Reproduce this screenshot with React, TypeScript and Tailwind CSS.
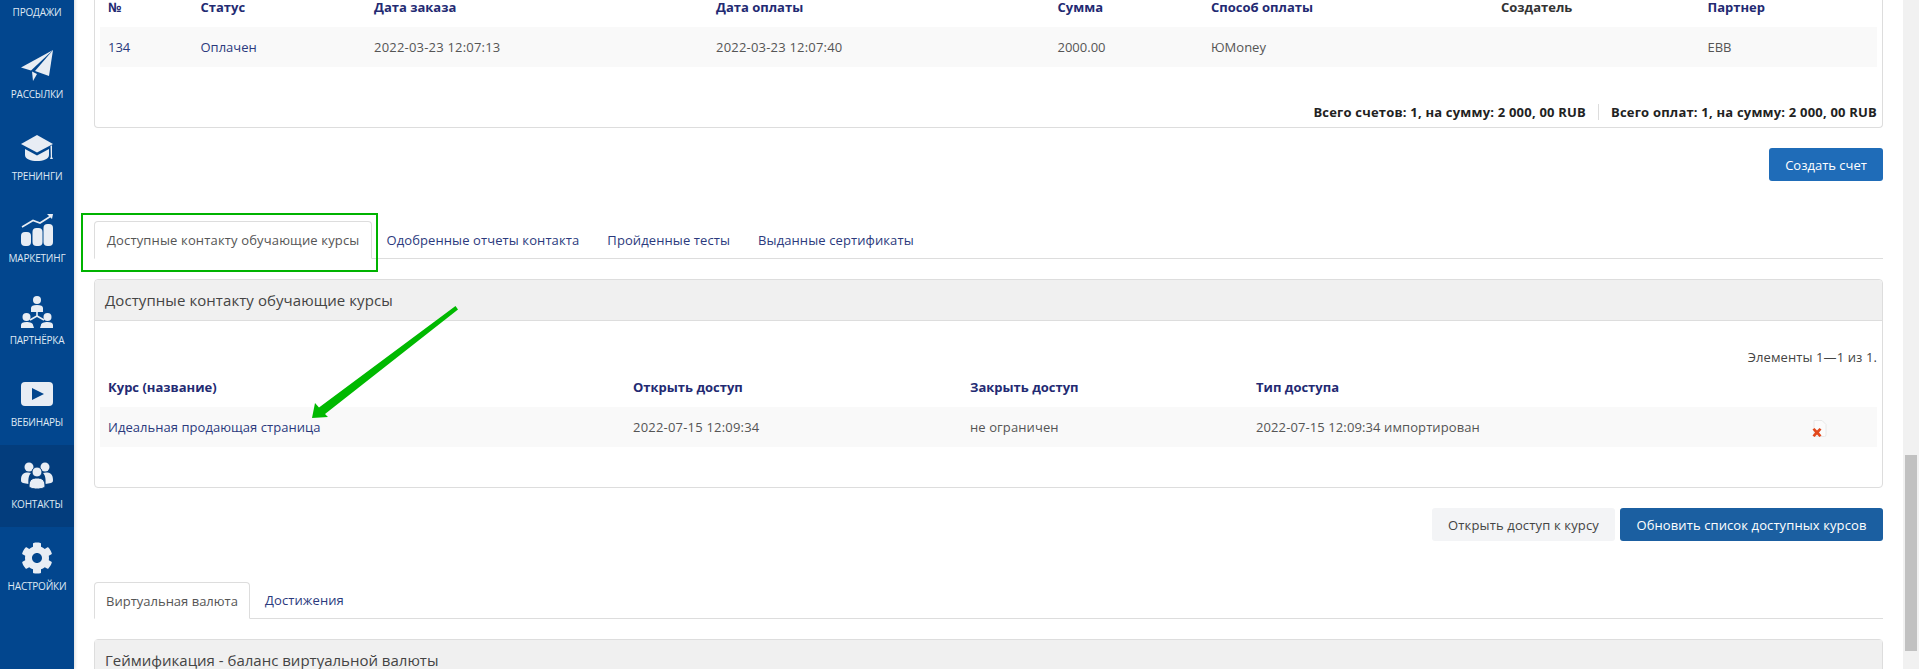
import React from "react";
import { FaCog } from "react-icons/fa";

const iconColor = "#e8edf4";

const PlaneIcon = () => (
  <svg width="32" height="32" viewBox="0 0 32 32" fill={iconColor}>
    <path d="M32 0 L0 17.5 L10 20.5 Z" />
    <path d="M32 0 L14 21 L28 26 Z" />
    <path d="M11 21.5 L16 24 L12 31 Z" />
  </svg>
);
const CapIcon = () => (
  <svg width="32" height="32" viewBox="0 0 32 32" fill={iconColor}>
    <path d="M16 3 L32 12 L16 20.5 L0 12 Z" />
    <path d="M4 17 L16 23.5 L28 17 L28 23 C28 27 22 29 16 29 C10 29 4 27 4 23 Z" />
    <path d="M29.5 14 L31 13.3 L31 25 L32 27 L29 27 L29.8 25 Z" />
  </svg>
);
const ChartIcon = () => (
  <svg width="32" height="32" viewBox="0 0 32 32" fill={iconColor}>
    <rect x="0" y="18" width="10" height="14" rx="4" />
    <rect x="11.5" y="14" width="10" height="18" rx="4" />
    <rect x="22.5" y="10" width="9.5" height="22" rx="4" />
    <path d="M1 13 L12 6.5 L19 9 L30 2" fill="none" stroke={iconColor} strokeWidth="1.6" />
    <path d="M26 0 L32 0 L31 5 Z" />
  </svg>
);
const PartnerIcon = () => (
  <svg width="32" height="32" viewBox="0 0 32 32" fill={iconColor}>
    <circle cx="16" cy="4" r="4" />
    <path d="M10 12 C10 10 12 9 16 9 C20 9 22 10 22 12 L22 16 L10 16 Z" />
    <path d="M16 16 L16 20 L9 24 M16 20 L23 24" fill="none" stroke={iconColor} strokeWidth="1.6" />
    <circle cx="5.5" cy="21" r="4" />
    <circle cx="26.5" cy="21" r="4" />
    <path d="M0 32 L0 29 C0 27 2 26 5.5 26 C9 26 12 27 12 29 L13 32 Z" />
    <path d="M19 32 L20 29 C20 27 23 26 26.5 26 C30 26 32 27 32 29 L32 32 Z" />
  </svg>
);
const PlayIcon = () => (
  <svg width="32" height="32" viewBox="0 0 32 32">
    <rect x="0" y="4" width="32" height="24" rx="4" fill={iconColor} />
    <path d="M11 10 L23 16 L11 22 Z" fill="#02468e" />
  </svg>
);
const UsersIcon = () => (
  <svg width="32" height="32" viewBox="0 0 32 32" fill={iconColor}>
    <circle cx="8" cy="7" r="4.5" />
    <circle cx="24" cy="7" r="4.5" />
    <path d="M0 20 C0 14 3 12.5 7 12.5 L10 13 C8 15 7 18 7.5 24 L2 23 C0.5 22.5 0 22 0 20 Z" />
    <path d="M32 20 C32 14 29 12.5 25 12.5 L22 13 C24 15 25 18 24.5 24 L30 23 C31.5 22.5 32 22 32 20 Z" />
    <circle cx="16" cy="12" r="5" fill={iconColor} stroke="#033d7d" strokeWidth="1" />
    <path d="M8 26 C8 20 11 18 16 18 C21 18 24 20 24 26 C24 28 20 29 16 29 C12 29 8 28 8 26 Z" stroke="#033d7d" strokeWidth="1" />
  </svg>
);

const navItems: [string, React.ReactNode, boolean][] = [
  ["Продажи", null, false],
  ["Рассылки", <PlaneIcon />, false],
  ["Тренинги", <CapIcon />, false],
  ["Маркетинг", <ChartIcon />, false],
  ["Партнёрка", <PartnerIcon />, false],
  ["Вебинары", <PlayIcon />, false],
  ["Контакты", <UsersIcon />, true],
  ["Настройки", <FaCog size={32} color={iconColor} />, false],
];

const navy = "text-[#232a72]";
const grid1 = "grid grid-cols-[92.5px_173.5px_342px_341.5px_153.5px_290px_206.5px_1fr] pl-2";
const grid2 = "grid grid-cols-[525px_337px_286px_1fr] pl-2";

const DeleteIcon = () => (
  <svg className="mt-[2px]" width="16" height="17" viewBox="0 0 16 17">
    <path d="M3 0.5 L11 0.5 L15 4.5 L15 15 Q15 16.5 13.5 16.5 L3 16.5 Z" fill="#fbfbfb" stroke="#e8e8e8" />
    <path d="M1.5 9.5 L3.5 8 L6 10.5 L8.5 8 L10.5 9.5 L8 12.5 L10.5 15.5 L8.5 17 L6 14.5 L3.5 17 L1.5 15.5 L4 12.5 Z" fill="#e2481c" />
  </svg>
);

const ActiveTab = ({ children, className }: { children: React.ReactNode; className: string }) => (
  <div className={`-mb-px flex items-center text-[#555] bg-white border border-[#ddd] border-b-white rounded-t-[4px] ${className}`}>
    {children}
  </div>
);
const Tab = ({ children, className }: { children: React.ReactNode; className: string }) => (
  <div className={`flex items-center text-[#2b3a7d] ${className}`}>{children}</div>
);

export default function App() {
  return (
    <div
      className="flex h-[669px] w-full overflow-hidden bg-white text-[13px] leading-4 text-[#555]"
      style={{ fontFamily: '"Open Sans", "Noto Sans", sans-serif' }}
    >
      <aside className="w-[74px] shrink-0 bg-[#02468e] shadow-[1px_0_3px_rgba(0,0,0,0.15)] -mt-[47px] h-[716px]">
        {navItems.map(([label, icon, active]) => (
          <div key={label} className={`h-[82px] flex flex-col items-center pt-[15px] ${active ? "bg-[#033d7d]" : ""}`}>
            <div className="h-[32px] w-[32px]">{icon}</div>
            <div className="mt-[5px] text-[10px] leading-[14px] uppercase tracking-[-0.2px] text-[#dfe8f3] whitespace-nowrap">
              {label}
            </div>
          </div>
        ))}
      </aside>

      <main className="relative flex-1 min-w-0 px-5">
        {/* Invoices panel */}
        <section className="h-[128px] border border-t-0 border-[#ddd] rounded-b-[4px] px-[5px]">
          <div className={`${grid1} h-[27px] font-bold leading-[14px] ${navy}`}>
            <div>№</div>
            <div>Статус</div>
            <div>Дата заказа</div>
            <div>Дата оплаты</div>
            <div>Сумма</div>
            <div>Способ оплаты</div>
            <div className="text-[#333]">Создатель</div>
            <div>Партнер</div>
          </div>
          <div className={`${grid1} h-[40px] items-center bg-[#f9f9f9]`}>
            <div className="text-[#2b3a7d]">134</div>
            <div className="text-[#2b3a7d]">Оплачен</div>
            <div className="tracking-[0.2px]">2022-03-23 12:07:13</div>
            <div className="tracking-[0.2px]">2022-03-23 12:07:40</div>
            <div>2000.00</div>
            <div>ЮMoney</div>
            <div />
            <div>EBB</div>
          </div>
          <div className="mt-[35px] flex justify-end items-center h-5 font-bold text-[#222] tracking-[0.2px]">
            <span>Всего счетов: 1, на сумму: 2 000, 00 RUB</span>
            <span className="mx-3 h-4 w-px bg-[#ddd]" />
            <span>Всего оплат: 1, на сумму: 2 000, 00 RUB</span>
          </div>
        </section>

        <div className="mt-5 flex justify-end">
          <button className="h-[33px] w-[114px] rounded-[3px] bg-[#1f6cb8] text-white text-[13px]">Создать счет</button>
        </div>

        {/* Tabs 1 */}
        <nav className="mt-[40px] flex border-b border-[#ddd] h-[38px]">
          <ActiveTab className="px-3 tracking-[0.15px]">Доступные контакту обучающие курсы</ActiveTab>
          <Tab className="px-[14px] tracking-[0.1px]">Одобренные отчеты контакта</Tab>
          <Tab className="px-[14px] tracking-[0.1px]">Пройденные тесты</Tab>
          <Tab className="px-[14px] tracking-[0.1px]">Выданные сертификаты</Tab>
        </nav>

        {/* Courses panel */}
        <section className="mt-5 h-[209px] border border-[#ddd] rounded-[4px]">
          <h3 className="h-[41px] px-[10px] flex items-center bg-[#f0f0f0] border-b border-[#ddd] rounded-t-[4px] text-[15px] font-normal text-[#444] tracking-[0.07px]">
            Доступные контакту обучающие курсы
          </h3>
          <div className="px-[5px]">
            <div className="mt-[28px] h-4 text-right text-[#444] tracking-[0.1px]">Элементы 1—1 из 1.</div>
            <div className={`${grid2} mt-[15px] h-[27px] font-bold leading-[14px] ${navy}`}>
              <div>Курс (название)</div>
              <div>Открыть доступ</div>
              <div>Закрыть доступ</div>
              <div>Тип доступа</div>
            </div>
            <div className={`${grid2} h-[40px] items-center bg-[#f9f9f9]`}>
              <div className="text-[#2b3a7d] tracking-[0.05px]">Идеальная продающая страница</div>
              <div className="tracking-[0.2px]">2022-07-15 12:09:34</div>
              <div className="tracking-[0.1px]">не ограничен</div>
              <div className="flex items-center justify-between pr-[50px]">
                <span className="tracking-[0.1px]">2022-07-15 12:09:34 импортирован</span>
                <DeleteIcon />
              </div>
            </div>
          </div>
        </section>

        <div className="mt-5 flex justify-end gap-[5px]">
          <button className="h-[33px] w-[183px] rounded-[3px] bg-[#f3f4f6] text-[#444] text-[13px] tracking-[0.15px]">
            Открыть доступ к курсу
          </button>
          <button className="h-[33px] w-[263px] rounded-[3px] bg-[#1b5fa1] text-white text-[13px] tracking-[0.1px]">
            Обновить список доступных курсов
          </button>
        </div>

        {/* Tabs 2 */}
        <nav className="mt-[41px] flex border-b border-[#ddd] h-[37px]">
          <ActiveTab className="w-[156px] justify-center">Виртуальная валюта</ActiveTab>
          <Tab className="px-[15px] tracking-[0.1px]">Достижения</Tab>
        </nav>

        <section className="mt-5 border border-[#ddd] rounded-t-[4px]">
          <h3 className="h-[41px] px-[10px] flex items-center bg-[#f0f0f0] border-b border-[#ddd] text-[15px] font-normal text-[#444]">
            Геймификация - баланс виртуальной валюты
          </h3>
        </section>

        {/* Annotation overlays */}
        <div className="absolute left-[7px] top-[213px] w-[297px] h-[59px] border-[2px] border-[#00b300]" />
        <svg className="absolute left-0 top-0 pointer-events-none" width="420" height="430" viewBox="74 0 420 430">
          <path d="M455.5 306 L458 309.5 L325 414 L328 417 L312 418 L315 403 L319 407.5 Z" fill="#00b900" />
        </svg>
      </main>

      <div className="w-4 shrink-0 bg-[#f1f1f1] px-[2px] pt-[455px]">
        <div className="h-[196px] bg-[#c1c1c1]" />
      </div>
    </div>
  );
}
